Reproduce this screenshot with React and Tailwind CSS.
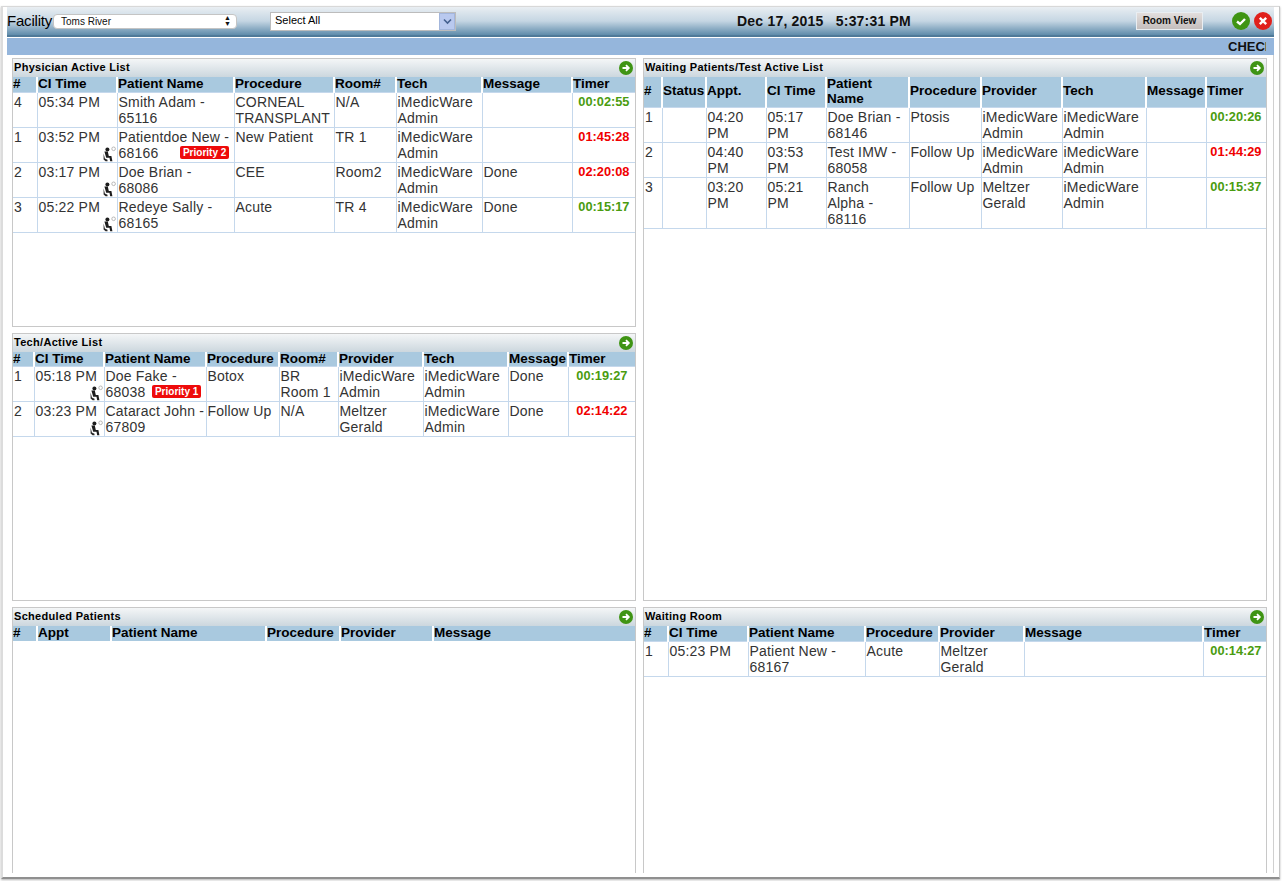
const GREEN = "text-[#4a9c10]";
const RED = "text-[#f00000]";

function Seat() {
  return (
    <svg width="14" height="16" viewBox="0 0 14 16" className="absolute right-[0px] bottom-[0px]">
      <circle cx="4.4" cy="3.6" r="2" fill="#1d1d1d" />
      <path d="M1.4 5.5h3.4l1 4.4h2.6l1 5.3H7.2l-.7-3.4H3.2z" fill="#1d1d1d" />
      <path d="M.6 7.5l1.3 5 2.6 1.2v1.5H2.6L.6 13.4z" fill="#2a2a2a" />
      <circle cx="10.6" cy="2.8" r="1.8" fill="#fff" stroke="#b0b0b0" strokeWidth="0.9" />
    </svg>
  );
}

function Arrow() {
  return (
    <svg width="14" height="14" viewBox="0 0 14 14" className="block">
      <circle cx="7" cy="7" r="7" fill="#3f9414" />
      <path d="M3.5 7h6M7 4.2L9.8 7 7 9.8" fill="none" stroke="#fff" strokeWidth="1.8" />
    </svg>
  );
}

function Panel({ title, height, cols, rows, mb, open, head = "leading-[14px] pb-[1px]", timerPad = "pr-[3px]" }) {
  return (
    <div className={`border border-[#c8c8c8] bg-white flex flex-col overflow-hidden ${open ? "border-b-0" : ""} ${height} ${mb || ""}`}>
      <div className="h-[18px] shrink-0 bg-gradient-to-b from-[#f4f6f7] to-[#ccd7de] flex items-center justify-between pl-[1px] pr-[2px]">
        <span className="text-[11px] font-bold text-black leading-[16px] tracking-[0.3px] pb-[2px]">{title}</span>
        <Arrow />
      </div>
      <table className="table-fixed border-collapse w-[622px] text-[14px] leading-[16px] text-[#333] tracking-[0.2px]">
        <colgroup>
          {cols.map((c, i) => (
            <col key={i} style={{ width: c.w }} />
          ))}
        </colgroup>
        <thead>
          <tr className="bg-[#a9c9df]">
            {cols.map((c, i) => (
              <th key={i} className={`text-left align-middle font-bold text-black text-[13.5px] tracking-normal border-l-2 border-white first:border-l-0 ${head}`}>
                {c.t}
              </th>
            ))}
          </tr>
        </thead>
        <tbody>
          {rows.map((r, ri) => (
            <tr key={ri}>
              {r.map((v, ci) => {
                const seat = v && v.seat;
                const timer = v && v.timer;
                return (
                  <td key={ci} className="relative align-top border border-[#c5d8ec] first:border-l-0 pl-[1px] pr-[1px] pt-[1px] pb-[1px] h-[35px] overflow-hidden">
                    {timer ? (
                      <div className={`text-right text-[12.8px] font-bold leading-[14px] pt-[1px] tracking-normal ${timerPad} ${v.red ? RED : GREEN}`}>{timer}</div>
                    ) : seat ? (
                      <>
                        {v.text}
                        <Seat />
                      </>
                    ) : v && v.badge ? (
                      <>
                        {v.text}
                        <span className={`inline-block align-top mt-[1px] bg-[#ee0a0a] text-white text-[10px] leading-[13px] font-bold px-[2.5px] h-[13px] rounded-[2px] whitespace-nowrap tracking-normal ${v.gap}`}>
                          {v.badge}
                        </span>
                      </>
                    ) : (
                      v
                    )}
                  </td>
                );
              })}
            </tr>
          ))}
        </tbody>
      </table>
    </div>
  );
}

const c = (t, w) => ({ t, w });
const g = (timer) => ({ timer });
const r = (timer) => ({ timer, red: true });
const s = (text) => ({ text, seat: true });
const IM = "iMedicWare Admin";
const MG = "Meltzer Gerald";

const physCols = [c("#", 24), c("CI Time", 80), c("Patient Name", 117), c("Procedure", 100), c("Room#", 62), c("Tech", 86), c("Message", 90), c("Timer", 63)];
const physRows = [
  ["4", "05:34 PM", "Smith Adam - 65116", "CORNEAL TRANSPLANT", "N/A", IM, "", g("00:02:55")],
  ["1", s("03:52 PM"), { text: "Patientdoe New - 68166", badge: "Priority 2", gap: "ml-[22px]" }, "New Patient", "TR 1", IM, "", r("01:45:28")],
  ["2", s("03:17 PM"), "Doe Brian - 68086", "CEE", "Room2", IM, "Done", r("02:20:08")],
  ["3", s("05:22 PM"), "Redeye Sally - 68165", "Acute", "TR 4", IM, "Done", g("00:15:17")],
];
const techCols = [c("#", 21), c("CI Time", 70), c("Patient Name", 102), c("Procedure", 73), c("Room#", 59), c("Provider", 85), c("Tech", 85), c("Message", 60), c("Timer", 67)];
const techRows = [
  ["1", s("05:18 PM"), { text: "Doe Fake - 68038", badge: "Priority 1", gap: "ml-[7px]" }, "Botox", "BR Room 1", IM, IM, "Done", g("00:19:27")],
  ["2", s("03:23 PM"), "Cataract John - 67809", "Follow Up", "N/A", MG, IM, "Done", r("02:14:22")],
];
const schedCols = [c("#", 24), c("Appt", 74), c("Patient Name", 155), c("Procedure", 74), c("Provider", 93), c("Message", 202)];
const waitCols = [c("#", 18), c("Status", 44), c("Appt.", 60), c("CI Time", 60), c("Patient Name", 83), c("Procedure", 72), c("Provider", 81), c("Tech", 84), c("Message", 60), c("Timer", 60)];
const waitRows = [
  ["1", "", "04:20 PM", "05:17 PM", "Doe Brian - 68146", "Ptosis", IM, IM, "", g("00:20:26")],
  ["2", "", "04:40 PM", "03:53 PM", "Test IMW - 68058", "Follow Up", IM, IM, "", r("01:44:29")],
  ["3", "", "03:20 PM", "05:21 PM", "Ranch Alpha - 68116", "Follow Up", MG, IM, "", g("00:15:37")],
];
const roomCols = [c("#", 24), c("CI Time", 80), c("Patient Name", 117), c("Procedure", 74), c("Provider", 85), c("Message", 179), c("Timer", 63)];
const roomRows = [["1", "05:23 PM", "Patient New - 68167", "Acute", MG, "", g("00:14:27")]];

export default function App() {
  return (
    <div className="w-[1282px] h-[881px] bg-white overflow-hidden pt-[6px] pl-[1px] font-['Liberation_Sans',Arial,sans-serif]">
      <div className="w-[1279px] h-[873px] border-t border-t-[#d8d8d8] border-l-2 border-l-[#dcdcdc] border-r border-r-[#c4c4c4] border-b-2 border-b-[#8f8f8f] pl-[4px] pr-[5px] shadow-[0_1px_2px_rgba(0,0,0,0.3)]">
        <div className="h-[30px] bg-gradient-to-b from-[#e9eef2] via-[#c5d6e3] to-[#5f8cab] border-b-2 border-[#4f7a99] flex items-center text-black">
          <span className="text-[15px] tracking-[-0.2px] w-[46px] shrink-0">Facility</span>
          <div className="w-[184px] h-[15px] shrink-0 bg-white border border-[#c4c4c4] rounded-[4px] flex items-center justify-between pl-[7px] pr-[5px] text-[10px] text-[#111]">
            <span>Toms River</span>
            <span className="text-[7px] leading-[6px] text-center">▲<br />▼</span>
          </div>
          <div className="w-[186px] h-[19px] ml-[33px] shrink-0 bg-white border border-[#bcbcbc] flex justify-between">
            <span className="text-[11px] leading-[15px] pl-[4px]">Select All</span>
            <span className="w-[16px] bg-[#b9c9ef] border border-[#a3b6dc] flex items-center justify-center">
              <svg width="9" height="7" viewBox="0 0 9 7"><path d="M1 1.5l3.5 3.5L8 1.5" fill="none" stroke="#44608f" strokeWidth="1.6" /></svg>
            </span>
          </div>
          <div className="w-[280px] ml-[228px] shrink-0 text-[14px] font-bold text-[#111] text-center whitespace-pre tracking-[0.2px]">Dec 17, 2015   5:37:31 PM</div>
          <div className="ml-[172px] w-[67px] h-[18px] shrink-0 bg-gradient-to-b from-[#e2dedd] to-[#c4bebd] border border-[#e9eef2] text-[10px] font-bold text-center leading-[16px] text-[#111]">Room View</div>
          <svg width="18" height="18" viewBox="0 0 18 18" className="ml-[29px] shrink-0">
            <circle cx="9" cy="9" r="9" fill="#3f9414" />
            <path d="M5 9.5l3 2.5 5-5" fill="none" stroke="#fff" strokeWidth="2.4" />
          </svg>
          <svg width="18" height="18" viewBox="0 0 18 18" className="ml-[4px] shrink-0">
            <circle cx="9" cy="9" r="9" fill="#e0201c" />
            <path d="M5.8 5.8l6.4 6.4M12.2 5.8l-6.4 6.4" fill="none" stroke="#fff" strokeWidth="2.4" />
          </svg>
        </div>
        <div className="h-[18px] bg-[#95b6dc] border-t border-white flex justify-end overflow-hidden">
          <div className="w-[38px] mr-[8px] overflow-hidden text-[13px] leading-[17px] font-bold text-[#111] whitespace-nowrap">CHECK</div>
        </div>
        <div className="flex h-[818px] pl-[5px] pt-[3px] gap-[7px] border-r border-[#d0d0d0]">
          <div className="w-[624px] shrink-0 flex flex-col">
            <Panel title="Physician Active List" height="h-[269px]" cols={physCols} rows={physRows} mb="mb-[6px]" timerPad="pr-[4px]" />
            <Panel title="Tech/Active List" height="h-[269px]" cols={techCols} rows={techRows} mb="mb-[6px]" head="leading-[14px]" timerPad="pr-[6px]" />
            <Panel title="Scheduled Patients" height="h-[266px]" cols={schedCols} rows={[]} open />
          </div>
          <div className="w-[624px] shrink-0 flex flex-col">
            <Panel title="Waiting Patients/Test Active List" height="h-[544px]" cols={waitCols} rows={waitRows} mb="mb-[6px]" head="leading-[14.5px] pb-[1px]" />
            <Panel title="Waiting Room" height="h-[266px]" cols={roomCols} rows={roomRows} open />
          </div>
        </div>
      </div>
    </div>
  );
}
